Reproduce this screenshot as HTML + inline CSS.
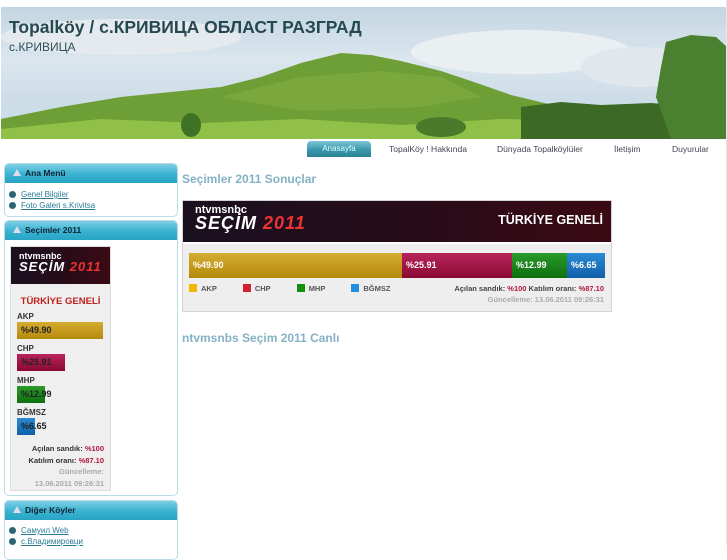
<!DOCTYPE html>
<html><head><meta charset="utf-8">
<style>
*{margin:0;padding:0;box-sizing:border-box}
body{width:727px;height:545px;overflow:hidden;background:#fff;font-family:"Liberation Sans",sans-serif;position:relative;font-size:9px}
.a{position:absolute}
.hdr{left:1px;top:7px;width:726px;height:132px;overflow:hidden;background:linear-gradient(#c4d6e2,#dbe6ee 40%,#cddde8 70%)}
.t1{left:8px;top:10px;font-size:17.5px;font-weight:bold;color:#264850;white-space:nowrap}
.t2{left:8px;top:33px;font-size:12px;color:#2e5058}
.nav{top:144px;font-size:8.5px;color:#445}
.btn{left:307px;top:141px;width:64px;height:16px;border-radius:4px 4px 0 0;background:linear-gradient(#7cc6d4,#3a98ac 55%,#2d8398);color:#dff;font-size:8px;text-align:center;line-height:16px}
.box{left:4px;width:174px;border:1px solid #b9dce6;border-radius:5px;background:#fff}
.bh{height:19px;border-radius:4px 4px 0 0;background:linear-gradient(#7fd0e4,#3cb4d2 50%,#26a4c4);font-weight:bold;font-size:8.5px;color:#123;line-height:18px;padding-left:20px;position:relative}
.bh:before{content:"";position:absolute;left:8px;top:5px;border-left:4px solid transparent;border-right:4px solid transparent;border-bottom:7px solid #dde;}
.lk{font-size:8px;color:#2a7c98;text-decoration:underline;padding-left:16px;position:relative;height:11px;line-height:11px}
.lk:before{content:"";position:absolute;left:4px;top:2px;width:7px;height:7px;border-radius:50%;background:#2a6478}
.logo{background:linear-gradient(90deg,#1a1020,#2a0c18 60%,#3a0a14)}
.ntv{color:#fff;font-weight:bold}
.sec{color:#fff;font-style:italic;font-weight:900;letter-spacing:1px}
.sec b{color:#e33}
.lb{font-weight:bold;font-size:8px;color:#333}
.bar{height:17px;font-weight:bold;font-size:9px;color:#222;line-height:17px;padding-left:4px;white-space:nowrap}
.y{background:linear-gradient(#d4ac30,#b48a0c)}
.r{background:linear-gradient(#b8245a,#8a0a34)}
.g{background:linear-gradient(#2a9a2a,#0e700e)}
.bl{background:linear-gradient(#2a8ad4,#1060a8)}
.sq{display:inline-block;width:8px;height:8px;margin-right:4px;vertical-align:-1px}
</style></head><body>
<div class="a hdr">
<svg width="726" height="132" style="position:absolute;left:0;top:0">
<ellipse cx="120" cy="30" rx="120" ry="18" fill="#e4eaee"/>
<ellipse cx="520" cy="45" rx="110" ry="22" fill="#eaeff2"/>
<ellipse cx="640" cy="60" rx="60" ry="20" fill="#e0e8ed"/>
<polygon points="0,112 60,100 120,90 180,84 220,80 260,70 300,56 340,46 370,48 400,54 440,64 470,74 510,88 560,100 600,104 726,100 726,132 0,132" fill="#6e9e36"/>
<polygon points="0,122 100,112 200,116 300,112 400,118 500,112 726,115 726,132 0,132" fill="#90c048"/>
<polygon points="220,90 300,70 380,64 440,70 480,90 420,100 300,104" fill="#7aa83c"/>
<polygon points="520,100 560,95 600,98 650,96 700,100 726,100 726,132 520,132" fill="#3c6a24"/>
<polygon points="665,35 690,28 715,30 726,40 726,132 670,132 655,90 660,60" fill="#4a8030"/>
<ellipse cx="190" cy="118" rx="10" ry="12" fill="#3e7224"/>
<ellipse cx="440" cy="120" rx="25" ry="10" fill="#4a7a2a"/>
</svg>
<div class="a t1">Topalköy / с.КРИВИЦА ОБЛАСТ РАЗГРАД</div>
<div class="a t2">с.КРИВИЦА</div>
</div>
<div class="a" style="left:726px;top:0;width:1px;height:545px;background:#e6e6e6"></div>
<div class="a btn">Anasayfa</div>
<div class="a nav" style="left:389px">TopalKöy ! Hakkında</div>
<div class="a nav" style="left:497px">Dünyada Topalköylüler</div>
<div class="a nav" style="left:614px">İletişim</div>
<div class="a nav" style="left:672px">Duyurular</div>

<div class="a box" style="top:163px;height:54px"><div class="bh">Ana Menü</div>
<div style="padding-top:6px"><div class="lk">Genel Bilgiler</div><div class="lk">Foto Galeri s.Krivitsa</div></div></div>

<div class="a box" style="top:220px;height:276px"><div class="bh">Seçimler 2011</div>
<div class="a" style="left:5px;top:25px;width:101px;height:245px;background:#efefef;border:1px solid #ddd">
<div class="logo" style="height:37px;padding:4px 0 0 8px"><div class="ntv" style="font-size:9px">ntvmsnbc</div><div class="sec" style="font-size:13px;margin-top:-2px">SEÇİM <b>2011</b></div></div>
<div style="text-align:center;color:#c0201c;font-weight:bold;font-size:9.5px;margin-top:12px">TÜRKİYE GENELİ</div>
<div style="padding-left:6px">
<div class="lb" style="margin-top:5px">AKP</div><div class="bar y" style="width:86px;margin-top:1px">%49.90</div>
<div class="lb" style="margin-top:5px">CHP</div><div class="bar r" style="width:48px;margin-top:1px">%25.91</div>
<div class="lb" style="margin-top:5px">MHP</div><div class="bar g" style="width:28px;margin-top:1px">%12.99</div>
<div class="lb" style="margin-top:5px">BĞMSZ</div><div class="bar bl" style="width:18px;margin-top:1px">%6.65</div>
</div>
<div style="text-align:right;padding-right:6px;font-size:7.5px;font-weight:bold;color:#333;line-height:11.5px;margin-top:8px">Açılan sandık: <span style="color:#b0183c">%100</span><br>Katılım oranı: <span style="color:#b0183c">%87.10</span><br><span style="color:#aaa">Güncelleme:<br>13.06.2011 09:26:31</span></div>
</div></div>

<div class="a box" style="top:500px;height:60px"><div class="bh">Diğer Köyler</div>
<div style="padding-top:5px"><div class="lk">Самуил Web</div><div class="lk">с.Владимировци</div></div></div>

<div class="a" style="left:182px;top:172px;font-size:12px;font-weight:bold;color:#84b2c4">Seçimler 2011 Sonuçlar</div>
<div class="a" style="left:182px;top:200px;width:430px;height:112px;background:#eee;border:1px solid #d4d4d4">
<div class="logo" style="height:43px;position:relative;padding:3px 0 0 12px;border-bottom:2px solid #fff"><div class="ntv" style="font-size:11px">ntvmsnbc</div><div class="sec" style="font-size:18px;margin-top:-3px">SEÇİM <b>2011</b></div>
<div class="a" style="right:8px;top:12px;color:#fff;font-weight:bold;font-size:12.5px">TÜRKİYE GENELİ</div></div>
<div class="a" style="left:6px;top:52px;width:416px;height:25px;display:flex">
<div class="bar y" style="width:213px;height:25px;line-height:25px;color:#fff">%49.90</div>
<div class="bar r" style="width:110px;height:25px;line-height:25px;color:#fff">%25.91</div>
<div class="bar g" style="width:55px;height:25px;line-height:25px;color:#fff">%12.99</div>
<div class="bar bl" style="width:38px;height:25px;line-height:25px;color:#fff">%6.65</div></div>
<div class="a lb" style="left:6px;top:83px;font-size:7.5px;color:#555"><span class="sq" style="background:#f0b800"></span>AKP<span class="sq" style="background:#d02030;margin-left:26px"></span>CHP<span class="sq" style="background:#109010;margin-left:26px"></span>MHP<span class="sq" style="background:#2090e0;margin-left:26px"></span>BĞMSZ</div>
<div class="a lb" style="right:7px;top:83px;font-size:7.5px;color:#444">Açılan sandık: <span style="color:#b0183c">%100</span> Katılım oranı: <span style="color:#b0183c">%87.10</span></div>
<div class="a lb" style="right:7px;top:94px;font-size:7.5px;color:#aaa">Güncelleme: 13.06.2011 09:26:31</div>
</div>
<div class="a" style="left:182px;top:331px;font-size:12px;font-weight:bold;color:#84b2c4">ntvmsnbs Seçim 2011 Canlı</div>
</body></html>
